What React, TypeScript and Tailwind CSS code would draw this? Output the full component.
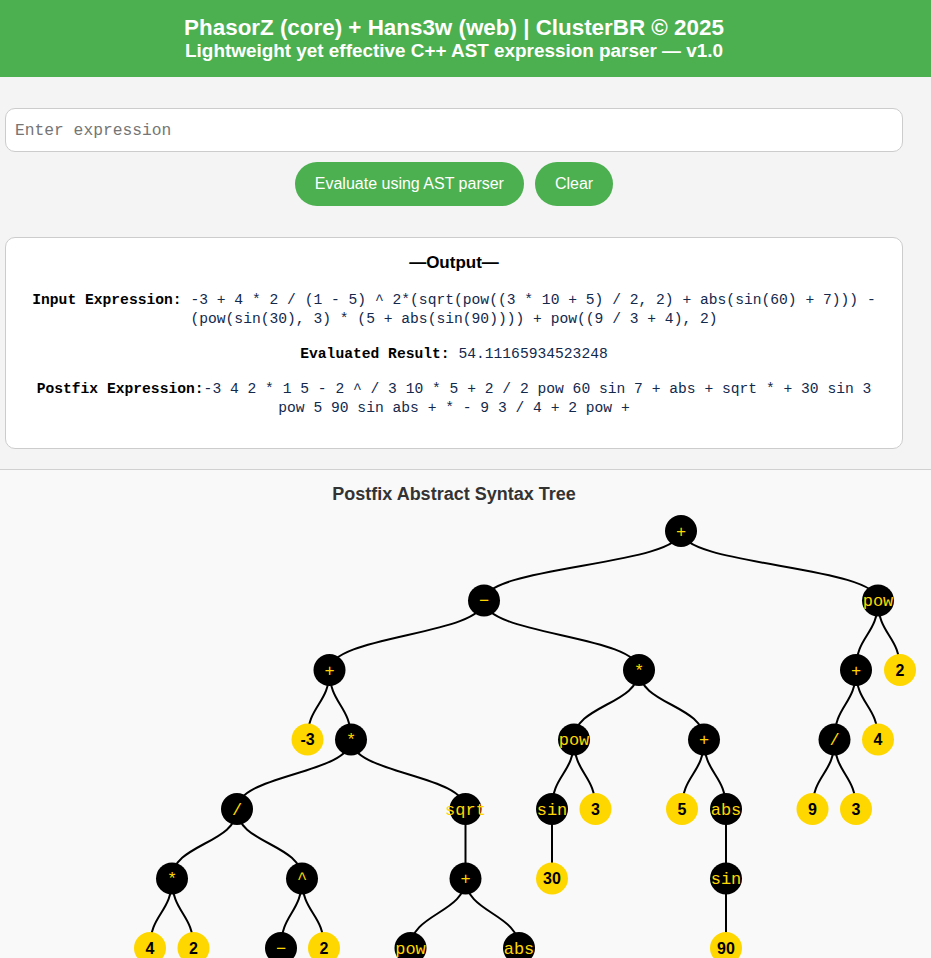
import { useState } from 'react';

type Node = { id: string; label: string; x: number; y: number; op: boolean };

const L = [531, 600.5, 670, 739.5, 809, 878.5, 948];

const nodes: Node[] = [
  { id: 'root', label: '+', x: 681, y: L[0], op: true },
  { id: 'minus', label: '−', x: 484, y: L[1], op: true },
  { id: 'powR', label: 'pow', x: 878, y: L[1], op: true },
  { id: 'plusL', label: '+', x: 329.5, y: L[2], op: true },
  { id: 'mulM', label: '*', x: 639, y: L[2], op: true },
  { id: 'plusR', label: '+', x: 856, y: L[2], op: true },
  { id: 'two1', label: '2', x: 900, y: L[2], op: false },
  { id: 'neg3', label: '-3', x: 307.5, y: L[3], op: false },
  { id: 'mulL', label: '*', x: 351, y: L[3], op: true },
  { id: 'powM', label: 'pow', x: 574, y: L[3], op: true },
  { id: 'plusM', label: '+', x: 704, y: L[3], op: true },
  { id: 'divR', label: '/', x: 834.5, y: L[3], op: true },
  { id: 'four1', label: '4', x: 878, y: L[3], op: false },
  { id: 'divL', label: '/', x: 237, y: L[4], op: true },
  { id: 'sqrt', label: 'sqrt', x: 465.5, y: L[4], op: true },
  { id: 'sin1', label: 'sin', x: 552, y: L[4], op: true },
  { id: 'three1', label: '3', x: 595.5, y: L[4], op: false },
  { id: 'five', label: '5', x: 682, y: L[4], op: false },
  { id: 'abs1', label: 'abs', x: 726, y: L[4], op: true },
  { id: 'nine', label: '9', x: 812.5, y: L[4], op: false },
  { id: 'three2', label: '3', x: 856, y: L[4], op: false },
  { id: 'mulLL', label: '*', x: 172, y: L[5], op: true },
  { id: 'caret', label: '^', x: 302, y: L[5], op: true },
  { id: 'plusS', label: '+', x: 465.5, y: L[5], op: true },
  { id: 'thirty', label: '30', x: 552, y: L[5], op: false },
  { id: 'sin2', label: 'sin', x: 726, y: L[5], op: true },
  { id: 'four2', label: '4', x: 150, y: L[6], op: false },
  { id: 'two2', label: '2', x: 193.5, y: L[6], op: false },
  { id: 'minus2', label: '−', x: 281, y: L[6], op: true },
  { id: 'two3', label: '2', x: 324, y: L[6], op: false },
  { id: 'powS', label: 'pow', x: 410.5, y: L[6], op: true },
  { id: 'abs2', label: 'abs', x: 519, y: L[6], op: true },
  { id: 'ninety', label: '90', x: 726, y: L[6], op: false },
];

const edges: [string, string][] = [
  ['root', 'minus'], ['root', 'powR'],
  ['minus', 'plusL'], ['minus', 'mulM'],
  ['powR', 'plusR'], ['powR', 'two1'],
  ['plusL', 'neg3'], ['plusL', 'mulL'],
  ['mulM', 'powM'], ['mulM', 'plusM'],
  ['plusR', 'divR'], ['plusR', 'four1'],
  ['mulL', 'divL'], ['mulL', 'sqrt'],
  ['powM', 'sin1'], ['powM', 'three1'],
  ['plusM', 'five'], ['plusM', 'abs1'],
  ['divR', 'nine'], ['divR', 'three2'],
  ['divL', 'mulLL'], ['divL', 'caret'],
  ['sqrt', 'plusS'],
  ['sin1', 'thirty'],
  ['abs1', 'sin2'],
  ['mulLL', 'four2'], ['mulLL', 'two2'],
  ['caret', 'minus2'], ['caret', 'two3'],
  ['plusS', 'powS'], ['plusS', 'abs2'],
  ['sin2', 'ninety'],
];

const byId = Object.fromEntries(nodes.map((n) => [n.id, n]));

function SyntaxTree() {
  return (
    <svg width={931} height={448} viewBox="0 510 931 448" className="block">
      {edges.map(([a, b]) => {
        const s = byId[a];
        const t = byId[b];
        const my = (s.y + t.y) / 2;
        return (
          <path
            key={a + b}
            d={`M${s.x},${s.y}C${s.x},${my} ${t.x},${my} ${t.x},${t.y}`}
            fill="none"
            stroke="#000"
            strokeWidth={2}
          />
        );
      })}
      {nodes.map((n) => (
        <g key={n.id}>
          <circle cx={n.x} cy={n.y} r={16} fill={n.op ? '#000' : '#FFD700'} />
          {n.op ? (
            <text
              x={n.x}
              y={n.y}
              dy="0.33em"
              textAnchor="middle"
              fill="#FFD700"
              fontSize={17}
              fontFamily="'Liberation Mono', 'Courier New', monospace"
            >
              {n.label}
            </text>
          ) : (
            <text
              x={n.x}
              y={n.y}
              dy="0.36em"
              textAnchor="middle"
              fill="#000"
              fontSize={16}
              fontWeight="bold"
              fontFamily="'Liberation Sans', Arial, sans-serif"
            >
              {n.label}
            </text>
          )}
        </g>
      ))}
    </svg>
  );
}

export default function App() {
  const [expr, setExpr] = useState('');

  return (
    <div className="min-h-screen bg-[#f4f4f4] font-['Liberation_Sans',Arial,sans-serif]">
      {/* Header */}
      <header className="h-[77px] bg-[#4CAF50] text-white font-bold">
        <div className="w-[908px] pt-[16px] text-center">
          <div className="text-[22.4px] leading-[24px]">PhasorZ (core) + Hans3w (web) | ClusterBR © 2025</div>
          <div className="text-[18.9px] leading-[22px]">Lightweight yet effective C++ AST expression parser — v1.0</div>
        </div>
      </header>

      <main className="w-[908px] px-[5px] pt-[31px]">
        <input
          value={expr}
          onChange={(e) => setExpr(e.target.value)}
          placeholder="Enter expression"
          className="block w-full h-[44px] px-[9px] rounded-[10px] border border-[#ccc] bg-white font-['Liberation_Mono',monospace] text-[16.3px] text-[#222] placeholder:text-[#757575] outline-none"
        />

        <div className="flex justify-center gap-[11px] mt-[10px]">
          <button className="h-[44px] px-5 rounded-full bg-[#4CAF50] text-white text-[16px]">
            Evaluate using AST parser
          </button>
          <button className="h-[44px] px-5 rounded-full bg-[#4CAF50] text-white text-[16px]" onClick={() => setExpr('')}>
            Clear
          </button>
        </div>

        {/* Output */}
        <div className="mt-[31px] bg-white border border-[#ccc] rounded-[10px] px-[15px] pt-[15px] pb-[30px] text-center">
          <h3 className="text-[17px] leading-[20px] font-bold text-black">—Output—</h3>
          <div className="font-['Liberation_Mono',monospace] text-[14.65px] leading-[19px] text-[#12294d]">
            <p className="mt-[18px]">
              <b className="text-black">Input Expression:</b> -3 + 4 * 2 / (1 - 5) ^ 2*(sqrt(pow((3 * 10 + 5) / 2, 2) + abs(sin(60) + 7))) - (pow(sin(30), 3) * (5 + abs(sin(90)))) + pow((9 / 3 + 4), 2)
            </p>
            <p className="mt-4">
              <b className="text-black">Evaluated Result:</b> 54.11165934523248
            </p>
            <p className="mt-4">
              <b className="text-black">Postfix Expression:</b>-3 4 2 * 1 5 - 2 ^ / 3 10 * 5 + 2 / 2 pow 60 sin 7 + abs + sqrt * + 30 sin 3 pow 5 90 sin abs + * - 9 3 / 4 + 2 pow +
            </p>
          </div>
        </div>
      </main>

      {/* Tree */}
      <section className="mt-[20px] border-t border-[#d0d0d0] bg-[#f9f9f9]">
        <h2 className="w-[908px] pt-[13px] text-center text-[18px] leading-[22px] font-bold text-[#333]">
          Postfix Abstract Syntax Tree
        </h2>
        <div className="mt-[5px]">
          <SyntaxTree />
        </div>
      </section>
    </div>
  );
}
